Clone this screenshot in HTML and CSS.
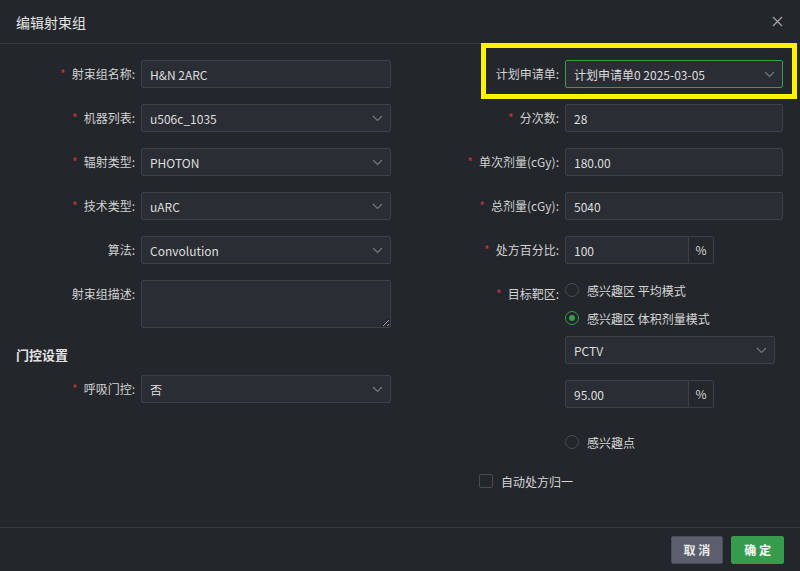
FILE: index.html
```html
<!DOCTYPE html>
<html lang="zh-CN">
<head>
    <meta charset="UTF-8">
    <title>编辑射束组</title>
    <link rel="stylesheet" href="styles.css">
</head>
<body>
<div class="dialog">
    <div class="dialog-kop">
        <span class="titel">编辑射束组</span>
        <svg class="sluit" width="11" height="11" viewBox="0 0 11 11"><path d="M1 1L10 10M10 1L1 10" stroke="#a4a6aa" stroke-width="1.2"/></svg>
    </div>

    <div class="dialog-body">
        <div class="kolom links">
            <div class="rij">
                <label class="veld-label"><span class="ster">*</span>射束组名称:</label>
                <input class="veld" type="text" value="H&amp;N 2ARC">
            </div>
            <div class="rij">
                <label class="veld-label"><span class="ster">*</span>机器列表:</label>
                <div class="veld keuze">u506c_1035<svg class="pijl" width="11" height="7" viewBox="0 0 11 7"><path d="M1 1l4.5 4.5L10 1" fill="none" stroke="#75787e" stroke-width="1.2"/></svg></div>
            </div>
            <div class="rij">
                <label class="veld-label"><span class="ster">*</span>辐射类型:</label>
                <div class="veld keuze">PHOTON<svg class="pijl" width="11" height="7" viewBox="0 0 11 7"><path d="M1 1l4.5 4.5L10 1" fill="none" stroke="#75787e" stroke-width="1.2"/></svg></div>
            </div>
            <div class="rij">
                <label class="veld-label"><span class="ster">*</span>技术类型:</label>
                <div class="veld keuze">uARC<svg class="pijl" width="11" height="7" viewBox="0 0 11 7"><path d="M1 1l4.5 4.5L10 1" fill="none" stroke="#75787e" stroke-width="1.2"/></svg></div>
            </div>
            <div class="rij">
                <label class="veld-label">算法:</label>
                <div class="veld keuze">Convolution<svg class="pijl" width="11" height="7" viewBox="0 0 11 7"><path d="M1 1l4.5 4.5L10 1" fill="none" stroke="#75787e" stroke-width="1.2"/></svg></div>
            </div>
            <div class="rij rij-hoog">
                <label class="veld-label">射束组描述:</label>
                <textarea class="veld tekstvak"></textarea>
            </div>

            <h3 class="sectie">门控设置</h3>

            <div class="rij">
                <label class="veld-label"><span class="ster">*</span>呼吸门控:</label>
                <div class="veld keuze">否<svg class="pijl" width="11" height="7" viewBox="0 0 11 7"><path d="M1 1l4.5 4.5L10 1" fill="none" stroke="#75787e" stroke-width="1.2"/></svg></div>
            </div>
        </div>

        <div class="kolom rechts">
            <div class="rij gemarkeerd">
                <label class="veld-label">计划申请单:</label>
                <div class="veld keuze actief">计划申请单0 2025-03-05<svg class="pijl" width="11" height="7" viewBox="0 0 11 7"><path d="M1 1l4.5 4.5L10 1" fill="none" stroke="#75787e" stroke-width="1.2"/></svg></div>
                <div class="markering"></div>
            </div>
            <div class="rij">
                <label class="veld-label"><span class="ster">*</span>分次数:</label>
                <input class="veld" type="text" value="28">
            </div>
            <div class="rij">
                <label class="veld-label"><span class="ster">*</span>单次剂量(cGy):</label>
                <input class="veld" type="text" value="180.00">
            </div>
            <div class="rij">
                <label class="veld-label"><span class="ster">*</span>总剂量(cGy):</label>
                <input class="veld" type="text" value="5040">
            </div>
            <div class="rij">
                <label class="veld-label"><span class="ster">*</span>处方百分比:</label>
                <div class="groep">
                    <input class="veld kort" type="text" value="100">
                    <span class="eenheid">%</span>
                </div>
            </div>

            <div class="rij rij-doel">
                <label class="veld-label"><span class="ster">*</span>目标靶区:</label>
                <div class="doel-opties">
                    <div class="radio"><span class="rondje"></span>感兴趣区 平均模式</div>
                    <div class="radio"><span class="rondje aan"></span>感兴趣区 体积剂量模式</div>
                    <div class="veld keuze smal">PCTV<svg class="pijl" width="11" height="7" viewBox="0 0 11 7"><path d="M1 1l4.5 4.5L10 1" fill="none" stroke="#75787e" stroke-width="1.2"/></svg></div>
                    <div class="groep">
                        <input class="veld kort" type="text" value="95.00">
                        <span class="eenheid">%</span>
                    </div>
                    <div class="radio punt"><span class="rondje"></span>感兴趣点</div>
                </div>
            </div>

            <div class="vinkje-rij">
                <span class="vakje"></span>自动处方归一
            </div>
        </div>
    </div>

    <div class="dialog-voet">
        <button class="knop knop-grijs">取 消</button>
        <button class="knop knop-groen">确 定</button>
    </div>
</div>
</body>
</html>
```

FILE: styles.css
```css
body {
    margin: 0;
    background-color: #23262b;
    font-family: "Noto Sans CJK SC", "Noto Sans", sans-serif;
    font-size: 12px;
    color: #d6d6d6;
}

.dialog {
    width: 800px;
    height: 571px;
    display: flex;
    flex-direction: column;
}

.dialog-kop {
    height: 43px;
    border-bottom: 1px solid #35373c;
    display: flex;
    align-items: center;
    justify-content: space-between;
    padding: 0 17px 0 16px;
}

.titel {
    font-size: 14px;
    color: #e4e4e4;
}

.dialog-body {
    flex: 1;
    display: grid;
    grid-template-columns: 400px 400px;
    padding-top: 16px;
}

.kolom {
    display: flex;
    flex-direction: column;
}

.rij {
    display: flex;
    align-items: flex-start;
    margin-bottom: 16px;
}

.veld-label {
    flex: none;
    height: 28px;
    line-height: 28px;
    text-align: right;
    padding-right: 6px;
    color: #d2d2d2;
    white-space: nowrap;
}

.links .veld-label {
    width: 135px;
}

.rechts .veld-label {
    width: 159px;
}

.ster {
    color: #c7343a;
    margin-right: 6px;
}

.veld {
    box-sizing: border-box;
    height: 28px;
    background-color: #2a2d34;
    border: 1px solid #3d4046;
    border-radius: 2px;
    color: #dedede;
    font-family: inherit;
    font-size: 12px;
    padding: 0 8px;
    outline: none;
}

.links .veld {
    width: 250px;
}

.rechts .veld {
    width: 218px;
}

.keuze {
    display: flex;
    align-items: center;
    justify-content: space-between;
}

.keuze .pijl {
    margin-right: -1px;
}

.actief {
    border-color: #3a9a4d;
}

.tekstvak {
    height: 48px;
    resize: vertical;
}

.links .rij-hoog {
    margin-bottom: 16px;
}

.sectie {
    margin: 0 0 9px 0;
    padding-left: 16px;
    height: 22px;
    line-height: 22px;
    font-size: 13px;
    font-weight: bold;
    color: #e2e2e2;
}

.gemarkeerd {
    position: relative;
}

.markering {
    position: absolute;
    left: 81px;
    top: -17px;
    width: 316px;
    height: 56px;
    box-sizing: border-box;
    border: 5px solid #fff200;
}

.groep {
    display: flex;
}

.rechts .veld.kort {
    width: 124px;
    border-radius: 2px 0 0 2px;
}

.eenheid {
    box-sizing: border-box;
    width: 25px;
    height: 28px;
    line-height: 26px;
    text-align: center;
    border: 1px solid #3d4046;
    border-left: none;
    border-radius: 0 2px 2px 0;
    background-color: #24272c;
    color: #d6d6d6;
}

.doel-opties {
    display: flex;
    flex-direction: column;
}

.radio {
    display: flex;
    align-items: center;
    height: 20px;
    margin-bottom: 8px;
    color: #d6d6d6;
}

.rondje {
    box-sizing: border-box;
    width: 14px;
    height: 14px;
    border: 1px solid #4a4c52;
    border-radius: 50%;
    margin-right: 8px;
    display: flex;
    align-items: center;
    justify-content: center;
}

.rondje.aan {
    border-color: #3a9a4d;
}

.rondje.aan::after {
    content: "";
    width: 6px;
    height: 6px;
    border-radius: 50%;
    background-color: #3a9a4d;
}

.rechts .veld.smal {
    width: 210px;
    margin-bottom: 16px;
}

.punt {
    margin-top: 24px;
    margin-bottom: 0;
}

.rij-doel {
    margin-bottom: 19px;
}

.vinkje-rij {
    display: flex;
    align-items: center;
    height: 20px;
    padding-left: 79px;
}

.vakje {
    box-sizing: border-box;
    width: 14px;
    height: 14px;
    border: 1px solid #4a4c52;
    border-radius: 2px;
    margin-right: 8px;
}

.dialog-voet {
    height: 43px;
    border-top: 1px solid #35373c;
    display: flex;
    justify-content: flex-end;
    align-items: center;
    gap: 8px;
    padding-right: 16px;
}

.knop {
    height: 28px;
    padding: 0 12px;
    border-radius: 2px;
    font-family: inherit;
    font-size: 12px;
    font-weight: bold;
    color: #eaeaea;
    cursor: pointer;
}

.knop-grijs {
    background-color: #5b5e6c;
    border: 1px solid #4b4d58;
}

.knop-groen {
    background-color: #379b4d;
    border: 1px solid #379b4d;
    color: #ffffff;
}
```
